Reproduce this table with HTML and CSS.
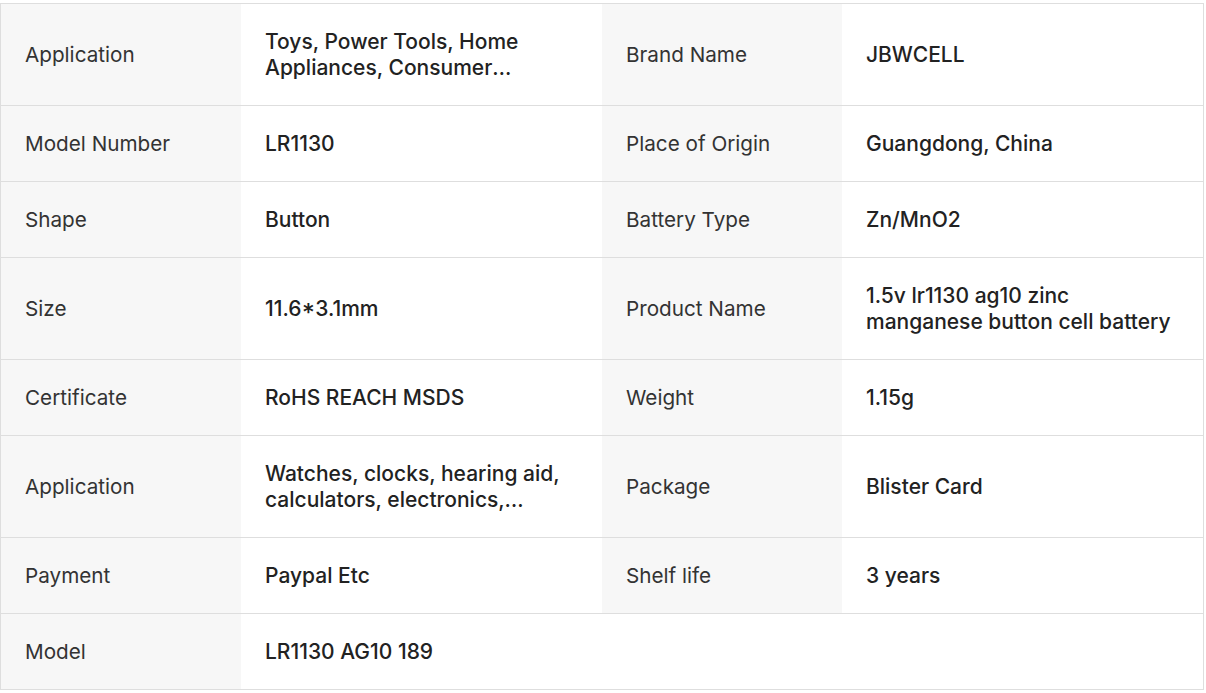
FILE: index.html
```html
<!DOCTYPE html>
<html>
<head>
<meta charset="utf-8">
<link rel="stylesheet" href="styles.css">
</head>
<body>
<div class="specs">
  <div class="row">
    <div class="cell label">Application</div>
    <div class="cell value"><span class="clamp">Toys, Power Tools, Home Appliances, Consumer Electronics, Remote Controls</span></div>
    <div class="cell label">Brand Name</div>
    <div class="cell value">JBWCELL</div>
  </div>
  <div class="row">
    <div class="cell label">Model Number</div>
    <div class="cell value">LR1130</div>
    <div class="cell label">Place of Origin</div>
    <div class="cell value">Guangdong, China</div>
  </div>
  <div class="row">
    <div class="cell label">Shape</div>
    <div class="cell value">Button</div>
    <div class="cell label">Battery Type</div>
    <div class="cell value">Zn/MnO2</div>
  </div>
  <div class="row">
    <div class="cell label">Size</div>
    <div class="cell value">11.6*3.1mm</div>
    <div class="cell label">Product Name</div>
    <div class="cell value"><span class="clamp">1.5v lr1130 ag10 zinc manganese button cell battery</span></div>
  </div>
  <div class="row">
    <div class="cell label">Certificate</div>
    <div class="cell value">RoHS REACH MSDS</div>
    <div class="cell label">Weight</div>
    <div class="cell value">1.15g</div>
  </div>
  <div class="row">
    <div class="cell label">Application</div>
    <div class="cell value"><span class="clamp">Watches, clocks, hearing aid, calculators, electronics, remote controls, toys</span></div>
    <div class="cell label">Package</div>
    <div class="cell value">Blister Card</div>
  </div>
  <div class="row">
    <div class="cell label">Payment</div>
    <div class="cell value">Paypal Etc</div>
    <div class="cell label">Shelf life</div>
    <div class="cell value">3 years</div>
  </div>
  <div class="row">
    <div class="cell label">Model</div>
    <div class="cell value wide">LR1130 AG10 189</div>
  </div>
</div>
</body>
</html>
```
FILE: styles.css
```css
html, body {
  margin: 0;
  padding: 0;
  background: #ffffff;
}
body {
  padding-top: 3px;
  font-family: Inter, "Noto Sans", "Liberation Sans", sans-serif;
}
.specs {
  width: 1204px;
  box-sizing: border-box;
  border: 1px solid #dedede;
}
.row {
  display: grid;
  grid-template-columns: 240px 361px 240px 361px;
  border-bottom: 1px solid #dedede;
}
.row:last-child {
  border-bottom: none;
}
.cell {
  display: flex;
  align-items: center;
  padding: 25px 25px 24px 24px;
  min-height: 26px;
  line-height: 26px;
  box-sizing: content-box;
}
.label {
  background: #f7f7f7;
  color: #333333;
  font-size: 20.7px;
  font-weight: 400;
}
.value {
  background: #ffffff;
  color: #222222;
  font-size: 21px;
  font-weight: 500;
}
.wide {
  grid-column: 2 / 5;
}
.clamp {
  display: -webkit-box;
  -webkit-line-clamp: 2;
  -webkit-box-orient: vertical;
  overflow: hidden;
}
```
